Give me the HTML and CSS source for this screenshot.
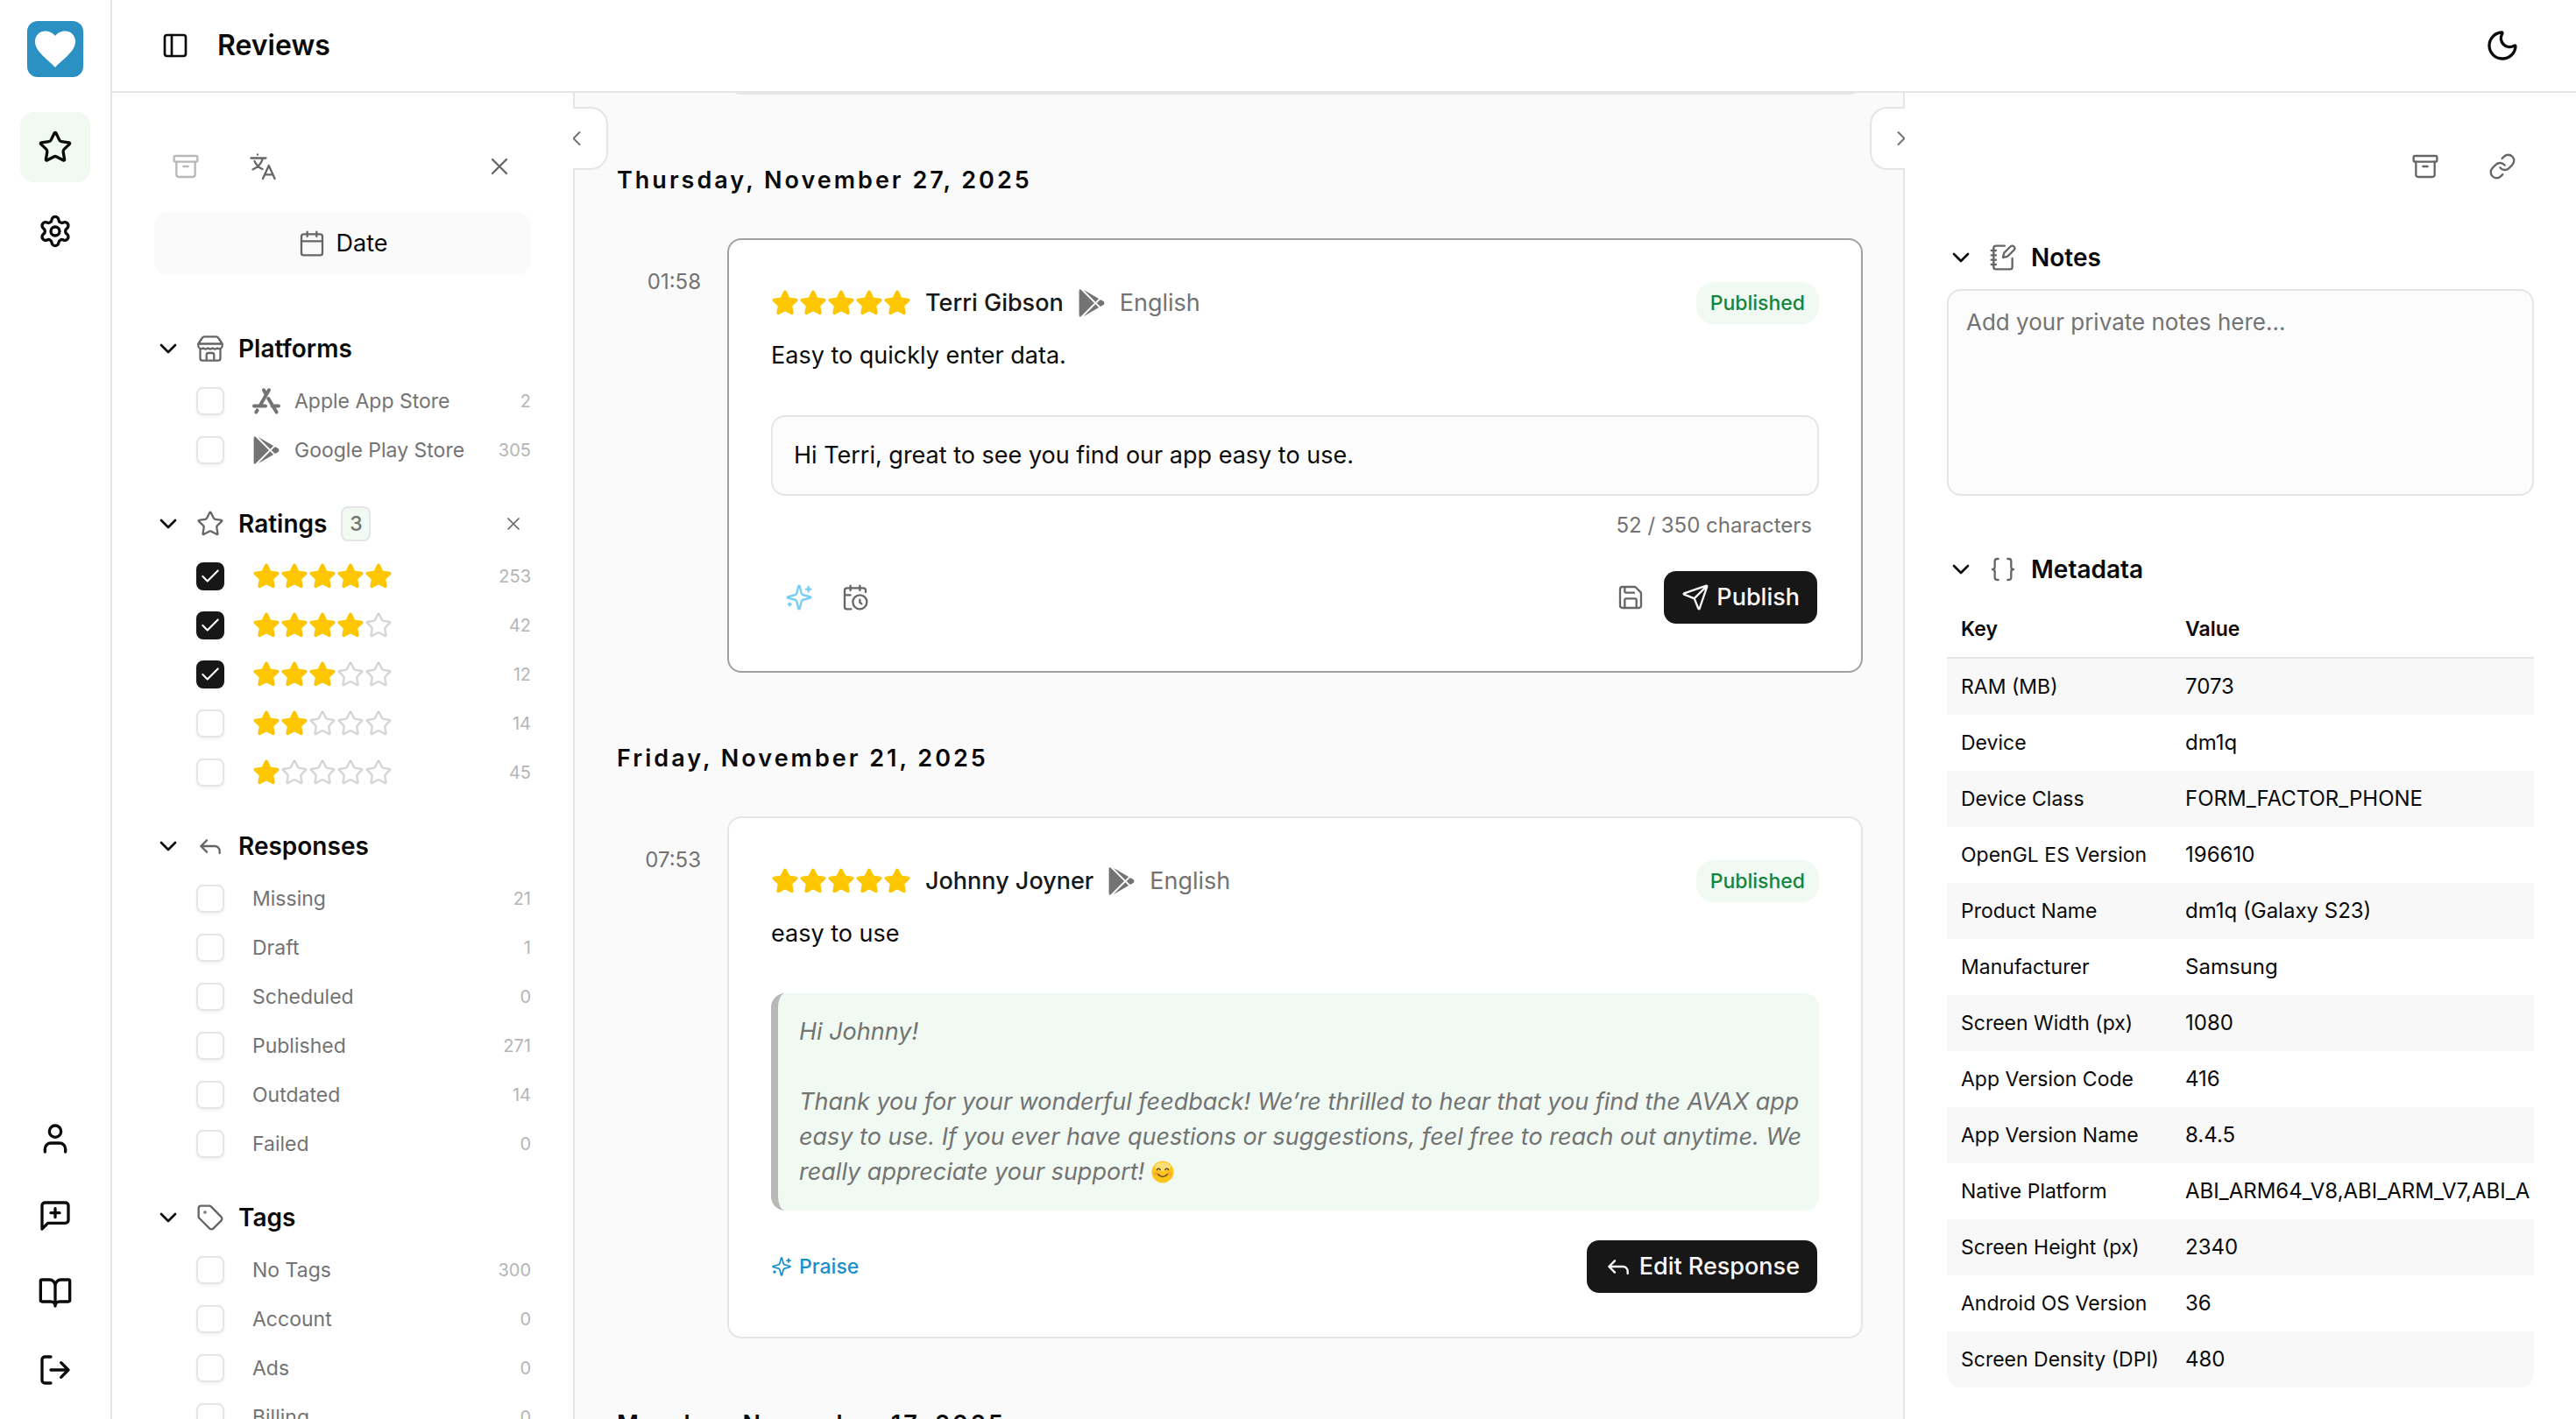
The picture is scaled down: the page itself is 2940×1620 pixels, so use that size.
FILE: index.html
```html
<!DOCTYPE html>
<html lang="en">
<head>
<meta charset="utf-8">
<meta name="viewport" content="width=device-width, initial-scale=1">
<title>Reviews</title>
<link rel="stylesheet" href="styles.css">
</head>
<body>
<svg class="sprite" aria-hidden="true">
  <symbol id="star" viewBox="0 0 24 24"><path d="M11.525 2.295a.53.53 0 0 1 .95 0l2.31 4.679a2.123 2.123 0 0 0 1.595 1.16l5.166.756a.53.53 0 0 1 .294.904l-3.736 3.638a2.123 2.123 0 0 0-.611 1.878l.882 5.14a.53.53 0 0 1-.771.56l-4.618-2.428a2.122 2.122 0 0 0-1.973 0L6.396 21.01a.53.53 0 0 1-.77-.56l.881-5.139a2.122 2.122 0 0 0-.611-1.879L2.16 9.795a.53.53 0 0 1 .294-.906l5.165-.755a2.122 2.122 0 0 0 1.597-1.16z"/></symbol>
  <symbol id="settings" viewBox="0 0 24 24"><path d="M9.671 4.136a2.34 2.34 0 0 1 4.659 0 2.34 2.34 0 0 0 3.319 1.915 2.34 2.34 0 0 1 2.33 4.033 2.34 2.34 0 0 0 0 3.831 2.34 2.34 0 0 1-2.33 4.033 2.34 2.34 0 0 0-3.319 1.915 2.34 2.34 0 0 1-4.659 0 2.34 2.34 0 0 0-3.32-1.915 2.34 2.34 0 0 1-2.33-4.033 2.34 2.34 0 0 0 0-3.831A2.34 2.34 0 0 1 6.35 6.051a2.34 2.34 0 0 0 3.319-1.915"/><circle cx="12" cy="12" r="3"/></symbol>
  <symbol id="user" viewBox="0 0 24 24"><path d="M19 21v-2a4 4 0 0 0-4-4H9a4 4 0 0 0-4 4v2"/><circle cx="12" cy="7" r="4"/></symbol>
  <symbol id="chat" viewBox="0 0 24 24"><path d="M21 15a2 2 0 0 1-2 2H7l-4 4V5a2 2 0 0 1 2-2h14a2 2 0 0 1 2 2zM12 7v6M9 10h6"/></symbol>
  <symbol id="book" viewBox="0 0 24 24"><path d="M12 7v14M3 18a1 1 0 0 1-1-1V4a1 1 0 0 1 1-1h5a4 4 0 0 1 4 4 4 4 0 0 1 4-4h5a1 1 0 0 1 1 1v13a1 1 0 0 1-1 1h-6a3 3 0 0 0-3 3 3 3 0 0 0-3-3z"/></symbol>
  <symbol id="logout" viewBox="0 0 24 24"><path d="M9 21H5a2 2 0 0 1-2-2V5a2 2 0 0 1 2-2h4M16 17l5-5-5-5M21 12H9"/></symbol>
  <symbol id="panel" viewBox="0 0 24 24"><rect x="3" y="3" width="18" height="18" rx="2"/><path d="M9 3v18"/></symbol>
  <symbol id="moon" viewBox="0 0 24 24"><path d="M20.985 12.486a9 9 0 1 1-9.473-9.472c.405-.022.617.46.402.803a6 6 0 0 0 8.268 8.268c.344-.215.825-.004.803.401"/></symbol>
  <symbol id="archive" viewBox="0 0 24 24"><rect x="2" y="3" width="20" height="5" rx="1"/><path d="M4 8v11a2 2 0 0 0 2 2h12a2 2 0 0 0 2-2V8M10 12h4"/></symbol>
  <symbol id="translate" viewBox="0 0 32 32"><path d="M2.5 6.500h17M10 2.500v.2M16 6.500C14.500 12 10.500 17 4.500 19.500M6.500 10c2 4 5 7.500 9 9M16 30l6.800-15 6.800 15M18.300 25.300h9"/></symbol>
  <symbol id="x" viewBox="0 0 24 24"><path d="M18 6 6 18M6 6l12 12"/></symbol>
  <symbol id="calendar" viewBox="0 0 24 24"><path d="M8 2v4M16 2v4M3 10h18"/><rect x="3" y="4" width="18" height="18" rx="2"/></symbol>
  <symbol id="down" viewBox="0 0 24 24"><path d="m6 9 6 6 6-6"/></symbol>
  <symbol id="left" viewBox="0 0 24 24"><path d="m15 18-6-6 6-6"/></symbol>
  <symbol id="right" viewBox="0 0 24 24"><path d="m9 18 6-6-6-6"/></symbol>
  <symbol id="store" viewBox="0 0 32 32"><path d="M2.300 10.500 7 3.500Q7.800 2.300 9.200 2.300h13.600q1.400 0 2.200 1.200l4.700 7zM2.300 10.500v2.500a3.400 3.400 0 0 0 5.500 2.400 4.300 4.300 0 0 0 5.500 0 4.300 4.300 0 0 0 5.400 0 4.300 4.300 0 0 0 5.500 0 3.400 3.400 0 0 0 5.500-2.400v-2.500M4.500 16.200V27q0 2.700 2.700 2.700h17.600q2.700 0 2.700-2.700V16.200M11.700 29.700v-6.500q0-2.200 2.200-2.200h4.200q2.200 0 2.200 2.200v6.500"/></symbol>
  <symbol id="appstore" viewBox="0 0 32 32"><path d="M19 3.300 9.300 20M5.600 26.400l-1.300 2.200M13 3.300l2.600 4.600M18.300 13l9.300 15.600M2 21.600h13M22.500 21.600H30"/></symbol>
  <symbol id="play" viewBox="0 0 512 512"><path d="M325.3 234.300L104.600 13l280.800 161.200-60.100 60.100zM47 0C34 6.800 25.300 19.200 25.300 35.300v441.300c0 16.100 8.700 28.500 21.700 35.300l256.600-256L47 0zm425.200 225.600l-58.900-34.100-65.700 64.500 65.700 64.500 60.100-34.100c18-14.300 18-46.500-1.200-60.800zM104.600 499l280.800-161.200-60.100-60.100L104.600 499z"/></symbol>
  <symbol id="reply" viewBox="0 0 24 24"><path d="M20 18v-2a4 4 0 0 0-4-4H4M9 17l-5-5 5-5"/></symbol>
  <symbol id="tag" viewBox="0 0 24 24"><path d="M12.586 2.586A2 2 0 0 0 11.172 2H4a2 2 0 0 0-2 2v7.172a2 2 0 0 0 .586 1.414l8.704 8.704a2.426 2.426 0 0 0 3.420 0l6.580-6.580a2.426 2.426 0 0 0 0-3.420z"/><circle cx="7.500" cy="7.500" r=".5"/></symbol>
  <symbol id="sparkles" viewBox="0 0 24 24"><path d="M9.937 15.500A2 2 0 0 0 8.500 14.063l-6.135-1.582a.5.5 0 0 1 0-.962L8.500 9.936A2 2 0 0 0 9.937 8.500l1.582-6.135a.5.5 0 0 1 .963 0L14.063 8.500A2 2 0 0 0 15.500 9.937l6.135 1.581a.5.5 0 0 1 0 .964L15.500 14.063a2 2 0 0 0-1.437 1.437l-1.582 6.135a.5.5 0 0 1-.963 0zM20 3v4M22 5h-4M4 17v2M5 18H3"/></symbol>
  <symbol id="schedule" viewBox="0 0 24 24"><path d="M21 7.500V6a2 2 0 0 0-2-2H5a2 2 0 0 0-2 2v14a2 2 0 0 0 2 2h3.500M16 2v4M8 2v4M3 10h5M17.500 17.500 16 16.300V14"/><circle cx="16" cy="16" r="6"/></symbol>
  <symbol id="save" viewBox="0 0 24 24"><path d="M15.200 3a2 2 0 0 1 1.400.6l3.800 3.800a2 2 0 0 1 .6 1.400V19a2 2 0 0 1-2 2H5a2 2 0 0 1-2-2V5a2 2 0 0 1 2-2zM17 21v-7a1 1 0 0 0-1-1H8a1 1 0 0 0-1 1v7M7 3v4a1 1 0 0 0 1 1h7"/></symbol>
  <symbol id="send" viewBox="0 0 24 24"><path d="M14.536 21.686a.5.5 0 0 0 .937-.024l6.500-19a.496.496 0 0 0-.635-.635l-19 6.500a.5.5 0 0 0-.024.937l7.930 3.180a2 2 0 0 1 1.112 1.110zM21.854 2.147l-10.940 10.939"/></symbol>
  <symbol id="link" viewBox="0 0 24 24"><path d="M10 13a5 5 0 0 0 7.540.540l3-3a5 5 0 0 0-7.070-7.070l-1.720 1.710M14 11a5 5 0 0 0-7.540-.540l-3 3a5 5 0 0 0 7.070 7.070l1.710-1.710"/></symbol>
  <symbol id="notebook" viewBox="0 0 24 24"><path d="M13.400 2H6a2 2 0 0 0-2 2v16a2 2 0 0 0 2 2h12a2 2 0 0 0 2-2v-7.400M2 6h4M2 10h4M2 14h4M2 18h4M21.378 5.626a1 1 0 1 0-3.004-3.004l-5.010 5.012a2 2 0 0 0-.506.854l-.837 2.870a.5.5 0 0 0 .620.620l2.870-.837a2 2 0 0 0 .854-.506z"/></symbol>
  <symbol id="braces" viewBox="0 0 24 24"><path d="M8 3H7a2 2 0 0 0-2 2v5a2 2 0 0 1-2 2 2 2 0 0 1 2 2v5c0 1.100.900 2 2 2h1M16 21h1a2 2 0 0 0 2-2v-5c0-1.100.900-2 2-2a2 2 0 0 1-2-2V5a2 2 0 0 0-2-2h-1"/></symbol>
  <symbol id="smile" viewBox="0 0 26 26"><circle cx="13" cy="13" r="12.500" fill="#fdc41c"/><ellipse cx="13" cy="7" rx="9" ry="5" fill="#fee07a"/><path d="M6.500 10.500q1.800-3 3.600 0M15.900 10.500q1.800-3 3.600 0M7.500 15.500q5.500 6 11 0" fill="none" stroke="#6b4a12" stroke-width="1.600" stroke-linecap="round"/><circle cx="5" cy="15" r="2.200" fill="#f79a3a" opacity=".6"/><circle cx="21" cy="15" r="2.200" fill="#f79a3a" opacity=".6"/></symbol>
  <symbol id="fivestars" viewBox="0 0 120 24"><use href="#star" width="24" height="24"/><use href="#star" x="24" width="24" height="24"/><use href="#star" x="48" width="24" height="24"/><use href="#star" x="72" width="24" height="24"/><use href="#star" x="96" width="24" height="24"/></symbol>
</svg>

<div class="app">
  <nav class="rail" aria-label="Main">
    <a class="logo" href="#" aria-label="Home"><svg viewBox="0 0 64 64"><path d="M32 53C24 44 9 35 9 23.500 9 16 14.500 11.500 20.500 11.500 26 11.500 30 14 32 17c2-3 6-5.500 11.500-5.500C49.500 11.500 55 16 55 23.500 55 35 40 44 32 53z" fill="#fff"/></svg></a>
    <div class="rail-main">
      <a class="rail-link active" href="#" aria-label="Reviews"><svg class="icon lg"><use href="#star"/></svg></a>
      <a class="rail-link" href="#" aria-label="Settings"><svg class="icon lg"><use href="#settings"/></svg></a>
    </div>
    <div class="rail-foot">
      <a class="rail-link" href="#" aria-label="Account"><svg class="icon lg"><use href="#user"/></svg></a>
      <a class="rail-link" href="#" aria-label="Feedback"><svg class="icon lg"><use href="#chat"/></svg></a>
      <a class="rail-link" href="#" aria-label="Docs"><svg class="icon lg"><use href="#book"/></svg></a>
      <a class="rail-link" href="#" aria-label="Log out"><svg class="icon lg"><use href="#logout"/></svg></a>
    </div>
  </nav>

  <div class="page">
    <header class="topbar">
      <button class="plain" aria-label="Toggle sidebar"><svg class="icon bold"><use href="#panel"/></svg></button>
      <h1>Reviews</h1>
      <button class="tool theme" aria-label="Dark mode"><svg class="icon lg"><use href="#moon"/></svg></button>
    </header>

    <div class="columns">
      <aside class="filters" aria-label="Filters">
        <div class="toolbar">
          <button class="tool" aria-label="Archived" disabled><svg class="icon"><use href="#archive"/></svg></button>
          <button class="tool" aria-label="Translate"><svg class="icon glyph32"><use href="#translate"/></svg></button>
          <button class="tool end" aria-label="Clear filters"><svg class="icon"><use href="#x"/></svg></button>
        </div>
        <button class="date"><svg class="icon"><use href="#calendar"/></svg>Date</button>

        <section class="group">
          <h2><button class="fold"><svg class="icon chev"><use href="#down"/></svg><svg class="icon glyph32"><use href="#store"/></svg>Platforms</button></h2>
          <label class="opt"><input type="checkbox"><span class="name"><svg class="icon brand"><use href="#appstore"/></svg>Apple App Store</span><span class="count">2</span></label>
          <label class="opt"><input type="checkbox"><span class="name"><svg class="icon solid"><use href="#play"/></svg>Google Play Store</span><span class="count">305</span></label>
        </section>

        <section class="group">
          <h2><button class="fold"><svg class="icon chev"><use href="#down"/></svg><svg class="icon"><use href="#star"/></svg>Ratings<span class="badge">3</span></button><button class="clear" aria-label="Clear ratings"><svg class="icon sm"><use href="#x"/></svg></button></h2>
          <label class="opt"><input type="checkbox" checked aria-label="5 stars"><span class="stars"><svg class="on"><use href="#star"/></svg><svg class="on"><use href="#star"/></svg><svg class="on"><use href="#star"/></svg><svg class="on"><use href="#star"/></svg><svg class="on"><use href="#star"/></svg></span><span class="count">253</span></label>
          <label class="opt"><input type="checkbox" checked aria-label="4 stars"><span class="stars"><svg class="on"><use href="#star"/></svg><svg class="on"><use href="#star"/></svg><svg class="on"><use href="#star"/></svg><svg class="on"><use href="#star"/></svg><svg><use href="#star"/></svg></span><span class="count">42</span></label>
          <label class="opt"><input type="checkbox" checked aria-label="3 stars"><span class="stars"><svg class="on"><use href="#star"/></svg><svg class="on"><use href="#star"/></svg><svg class="on"><use href="#star"/></svg><svg><use href="#star"/></svg><svg><use href="#star"/></svg></span><span class="count">12</span></label>
          <label class="opt"><input type="checkbox" aria-label="2 stars"><span class="stars"><svg class="on"><use href="#star"/></svg><svg class="on"><use href="#star"/></svg><svg><use href="#star"/></svg><svg><use href="#star"/></svg><svg><use href="#star"/></svg></span><span class="count">14</span></label>
          <label class="opt"><input type="checkbox" aria-label="1 star"><span class="stars"><svg class="on"><use href="#star"/></svg><svg><use href="#star"/></svg><svg><use href="#star"/></svg><svg><use href="#star"/></svg><svg><use href="#star"/></svg></span><span class="count">45</span></label>
        </section>

        <section class="group">
          <h2><button class="fold"><svg class="icon chev"><use href="#down"/></svg><svg class="icon"><use href="#reply"/></svg>Responses</button></h2>
          <label class="opt"><input type="checkbox"><span class="name">Missing</span><span class="count">21</span></label>
          <label class="opt"><input type="checkbox"><span class="name">Draft</span><span class="count">1</span></label>
          <label class="opt"><input type="checkbox"><span class="name">Scheduled</span><span class="count">0</span></label>
          <label class="opt"><input type="checkbox"><span class="name">Published</span><span class="count">271</span></label>
          <label class="opt"><input type="checkbox"><span class="name">Outdated</span><span class="count">14</span></label>
          <label class="opt"><input type="checkbox"><span class="name">Failed</span><span class="count">0</span></label>
        </section>

        <section class="group">
          <h2><button class="fold"><svg class="icon chev"><use href="#down"/></svg><svg class="icon"><use href="#tag"/></svg>Tags</button></h2>
          <label class="opt"><input type="checkbox"><span class="name">No Tags</span><span class="count">300</span></label>
          <label class="opt"><input type="checkbox"><span class="name">Account</span><span class="count">0</span></label>
          <label class="opt"><input type="checkbox"><span class="name">Ads</span><span class="count">0</span></label>
          <label class="opt"><input type="checkbox"><span class="name">Billing</span><span class="count">0</span></label>
        </section>
      </aside>

      <main class="feed">
        <button class="tab tab-left" aria-label="Collapse filters"><svg class="icon md"><use href="#left"/></svg></button>
        <button class="tab tab-right" aria-label="Collapse details"><svg class="icon md"><use href="#right"/></svg></button>

        <div class="list">
          <div class="entry scrolled"><span></span><article class="card"></article></div>

          <h2 class="day">Thursday, November 27, 2025</h2>
          <div class="entry">
            <time>01:58</time>
            <article class="card selected">
              <div class="meta">
                <svg class="five"><use href="#fivestars"/></svg>
                <strong>Terri Gibson</strong>
                <svg class="icon solid"><use href="#play"/></svg>
                <span class="lang">English</span>
                <span class="status">Published</span>
              </div>
              <p class="text">Easy to quickly enter data.</p>
              <textarea class="reply" aria-label="Response" rows="1">Hi Terri, great to see you find our app easy to use.</textarea>
              <p class="chars">52 / 350 characters</p>
              <div class="actions editor">
                <button class="act ai" aria-label="Suggest"><svg class="icon"><use href="#sparkles"/></svg></button>
                <button class="act" aria-label="Schedule"><svg class="icon"><use href="#schedule"/></svg></button>
                <button class="act end" aria-label="Save draft"><svg class="icon"><use href="#save"/></svg></button>
                <button class="primary"><svg class="icon"><use href="#send"/></svg>Publish</button>
              </div>
            </article>
          </div>

          <h2 class="day">Friday, November 21, 2025</h2>
          <div class="entry">
            <time>07:53</time>
            <article class="card">
              <div class="meta">
                <svg class="five"><use href="#fivestars"/></svg>
                <strong>Johnny Joyner</strong>
                <svg class="icon solid"><use href="#play"/></svg>
                <span class="lang">English</span>
                <span class="status">Published</span>
              </div>
              <p class="text">easy to use</p>
              <blockquote>Hi Johnny!<br><br>Thank you for your wonderful feedback! We’re thrilled to hear that you find the AVAX app easy to use. If you ever have questions or suggestions, feel free to reach out anytime. We really appreciate your support! <svg class="emoji" role="img" aria-label="smile"><use href="#smile"/></svg></blockquote>
              <div class="actions">
                <a class="label" href="#"><svg class="icon sm"><use href="#sparkles"/></svg>Praise</a>
                <button class="primary end"><svg class="icon"><use href="#reply"/></svg>Edit Response</button>
              </div>
            </article>
          </div>

          <h2 class="day">Monday, November 17, 2025</h2>
        </div>
      </main>

      <aside class="details" aria-label="Details">
        <div class="toolbar">
          <button class="tool end" aria-label="Archive"><svg class="icon"><use href="#archive"/></svg></button>
          <button class="tool" aria-label="Copy link"><svg class="icon"><use href="#link"/></svg></button>
        </div>

        <section class="notes">
          <h2><button class="fold"><svg class="icon chev"><use href="#down"/></svg><svg class="icon"><use href="#notebook"/></svg>Notes</button></h2>
          <textarea class="note" aria-label="Notes" placeholder="Add your private notes here..."></textarea>
        </section>

        <section class="metadata">
          <h2><button class="fold"><svg class="icon chev"><use href="#down"/></svg><svg class="icon"><use href="#braces"/></svg>Metadata</button></h2>
          <table>
            <thead><tr><th scope="col">Key</th><th scope="col">Value</th></tr></thead>
            <tbody>
              <tr><td>RAM (MB)</td><td>7073</td></tr>
              <tr><td>Device</td><td>dm1q</td></tr>
              <tr><td>Device Class</td><td>FORM_FACTOR_PHONE</td></tr>
              <tr><td>OpenGL ES Version</td><td>196610</td></tr>
              <tr><td>Product Name</td><td>dm1q (Galaxy S23)</td></tr>
              <tr><td>Manufacturer</td><td>Samsung</td></tr>
              <tr><td>Screen Width (px)</td><td>1080</td></tr>
              <tr><td>App Version Code</td><td>416</td></tr>
              <tr><td>App Version Name</td><td>8.4.5</td></tr>
              <tr><td>Native Platform</td><td>ABI_ARM64_V8,ABI_ARM_V7,ABI_A</td></tr>
              <tr><td>Screen Height (px)</td><td>2340</td></tr>
              <tr><td>Android OS Version</td><td>36</td></tr>
              <tr><td>Screen Density (DPI)</td><td>480</td></tr>
            </tbody>
          </table>
        </section>
      </aside>
    </div>
  </div>
</div>
</body>
</html>
```
FILE: styles.css
```css
:root {
  --ink: #0a0a0a;
  --muted: #737373;
  --faint: #b5b5b5;
  --line: #e5e5e5;
  --surface: #fafafa;
  --mint: #f0f9f2;
  --dark: #171717;
  --blue: #2a91c2;
}

* { box-sizing: border-box; }

body {
  margin: 0;
  font-family: Inter, "Liberation Sans", sans-serif;
  font-size: 27px;
  line-height: 40px;
  color: var(--ink);
  background: #fff;
}

h1, h2, p, blockquote { margin: 0; }

button {
  font: inherit;
  color: inherit;
  background: none;
  border: 0;
  padding: 0;
  display: flex;
  align-items: center;
  justify-content: center;
}

a { color: inherit; text-decoration: none; }

.sprite { display: none; }

.icon {
  width: 32px;
  height: 32px;
  flex: none;
  fill: none;
  stroke: currentColor;
  stroke-width: 1.75;
  stroke-linecap: round;
  stroke-linejoin: round;
}
.icon.lg { width: 40px; height: 40px; stroke-width: 2; }
.icon.md { width: 28px; height: 28px; }
.icon.sm { width: 24px; height: 24px; }
.icon.bold { stroke-width: 2; }
.icon.glyph32 { stroke-width: 2.3; }
.icon.brand { stroke-width: 4; }
.icon.solid { fill: var(--muted); stroke: none; }

.app { display: flex; height: 100vh; overflow: hidden; }

/* Icon rail */
.rail {
  flex: none;
  width: 128px;
  display: flex;
  flex-direction: column;
  align-items: center;
  padding: 24px 0 16px;
  border-right: 2px solid var(--line);
}
.logo { width: 64px; height: 64px; border-radius: 12px; background: var(--blue); }
.logo svg { display: block; }
.rail-main { display: grid; gap: 16px; margin-top: 40px; }
.rail-foot { display: grid; gap: 8px; margin-top: auto; }
.rail-link {
  width: 80px;
  height: 80px;
  display: grid;
  place-items: center;
  border-radius: 16px;
}
.rail-link.active { background: var(--mint); }

/* Page frame */
.page { flex: 1; min-width: 0; display: flex; flex-direction: column; }
.topbar {
  flex: none;
  display: flex;
  align-items: center;
  height: 106px;
  padding: 0 48px 0 56px;
  border-bottom: 2px solid var(--line);
}
.topbar h1 { margin-left: 32px; font-size: 32px; font-weight: 600; }
.theme { margin-left: auto; }
.columns { flex: 1; min-height: 0; display: flex; }

.toolbar { display: flex; gap: 16px; color: #666; }
.tool { width: 72px; height: 72px; }
.tool:disabled { color: #b8b8b8; }
.end { margin-left: auto; }

.filters h2, .details h2 { display: flex; align-items: center; height: 40px; }
.fold { gap: 16px; font-size: 28px; font-weight: 600; }
.fold .icon { color: #666; }
.fold .icon.chev { color: var(--ink); stroke-width: 2; }

/* Filters */
.filters {
  flex: none;
  width: 528px;
  overflow: hidden;
  padding: 48px 48px 0;
  border-right: 2px solid var(--line);
}
.date {
  width: 100%;
  height: 72px;
  gap: 12px;
  margin: 16px 0 64px;
  border-radius: 16px;
  background: var(--surface);
}
.date .icon { color: #666; }
.group { margin-bottom: 36px; }
.group h2 { margin-bottom: 12px; justify-content: space-between; }
.badge {
  width: 34px;
  height: 40px;
  line-height: 36px;
  border: 2px solid var(--line);
  border-radius: 8px;
  background: var(--mint);
  color: var(--muted);
  font-size: 23px;
  font-weight: 500;
}
.clear { width: 40px; height: 40px; color: #666; }
.opt {
  display: flex;
  align-items: center;
  height: 56px;
  padding-left: 48px;
  font-size: 23px;
  color: var(--muted);
}
.opt input {
  appearance: none;
  flex: none;
  width: 32px;
  height: 32px;
  margin: 0 32px 0 0;
  border: 2px solid var(--line);
  border-radius: 8px;
  background: #fff center / 26px no-repeat;
  box-shadow: 0 2px 4px rgb(0 0 0 / 5%);
}
.opt input:checked {
  border-color: var(--dark);
  background-color: var(--dark);
  background-image: url("data:image/svg+xml,%3Csvg xmlns='http://www.w3.org/2000/svg' viewBox='0 0 24 24' fill='none' stroke='white' stroke-width='2' stroke-linecap='round' stroke-linejoin='round'%3E%3Cpath d='M20 6 9 17l-5-5'/%3E%3C/svg%3E");
}
.name { display: flex; align-items: center; gap: 16px; }
.count { margin-left: auto; font-size: 20px; color: var(--faint); }
.stars { display: flex; }
.stars svg {
  width: 32px;
  height: 32px;
  fill: none;
  stroke: #d4d4d4;
  stroke-width: 1.75;
}
.stars .on { fill: #fdc700; stroke: #fdc700; }

/* Review feed */
.feed {
  position: relative;
  flex: 1;
  min-width: 0;
  overflow: clip;
  overflow-clip-margin: 2px;
  background: var(--surface);
}
.tab {
  position: absolute;
  top: 16px;
  z-index: 1;
  width: 40px;
  height: 72px;
  border: 2px solid var(--line);
  background: #fff;
  color: var(--muted);
}
.tab-left {
  left: -2px;
  justify-content: flex-start;
  border-left: 0;
  border-radius: 0 20px 20px 0;
}
.tab-right {
  right: -2px;
  justify-content: flex-end;
  border-right: 0;
  border-radius: 20px 0 0 20px;
}
.tab .icon { margin: 0 -10px; }
.list { height: 100%; overflow: hidden; padding: 0 46px 0 48px; }
.entry { display: grid; grid-template-columns: 96px minmax(0, 1fr); gap: 30px; }
.entry.scrolled { margin-top: -98px; }
.day {
  padding: 80px 0 48px;
  line-height: 36px;
  font-size: 27px;
  font-weight: 600;
  letter-spacing: 3px;
}
time {
  padding-top: 34px;
  line-height: 32px;
  font-size: 24px;
  text-align: right;
  color: var(--muted);
}
.card {
  padding: 48px;
  border: 2px solid var(--line);
  border-radius: 16px;
  background: #fff;
}
.card.selected { border-color: #a1a1a1; }
.meta { display: flex; align-items: center; gap: 16px; height: 48px; }
.five {
  width: 160px;
  height: 32px;
  fill: #fdc700;
  stroke: #fdc700;
  stroke-width: 1.75;
}
.meta strong { font-weight: 500; color: var(--dark); }
.lang { color: var(--muted); }
.status {
  margin-left: auto;
  padding: 0 16px;
  line-height: 48px;
  border-radius: 20px;
  background: var(--mint);
  color: #15853b;
  font-size: 23px;
  font-weight: 500;
}
.text { margin: 16px 0 48px; }
textarea {
  display: block;
  width: 100%;
  font: inherit;
  color: inherit;
  border: 2px solid var(--line);
  border-radius: 16px;
  background: #fcfcfc;
  resize: none;
  overflow: hidden;
}
textarea::placeholder { color: var(--muted); opacity: 1; }
.reply { height: 92px; padding: 24px; }
.chars {
  margin: 16px 0 32px;
  padding-right: 8px;
  line-height: 36px;
  font-size: 24px;
  text-align: right;
  color: var(--muted);
}
.actions { display: flex; align-items: center; padding: 2px 2px 2px 0; }
.actions.editor { padding-bottom: 6px; }
.act { width: 64px; height: 60px; color: #666; }
.act.ai { color: #78cdf5; }
.act.end { margin-right: 6px; }
.primary {
  height: 60px;
  gap: 8px;
  padding: 0 20px;
  border-radius: 14px;
  background: var(--dark);
  color: #fafafa;
  font-weight: 500;
}
blockquote {
  margin-bottom: 32px;
  padding: 24px 12px 24px 24px;
  border-left: 8px solid #b8b8b8;
  border-radius: 16px;
  background: var(--mint);
  color: var(--muted);
  font-style: italic;
}
.emoji { width: 26px; height: 26px; vertical-align: -4px; }
.label { display: flex; align-items: center; gap: 8px; font-size: 23px; font-weight: 500; color: #1890cc; }

/* Details */
.details {
  flex: none;
  width: 768px;
  overflow: hidden;
  padding: 48px 48px 0;
  border-left: 2px solid var(--line);
}
.notes { margin: 48px 0 64px; }
.note { height: 236px; margin-top: 16px; padding: 16px 20px; font-size: 26px; }
table {
  width: 100%;
  margin-top: 16px;
  table-layout: fixed;
  border-collapse: separate;
  border-spacing: 0;
  font-size: 24px;
}
th, td { height: 64px; padding: 0 16px; text-align: left; }
th { height: 66px; border-bottom: 2px solid var(--line); font-size: 23px; font-weight: 600; }
th:first-child { width: 256px; }
td { white-space: nowrap; }
td:first-child { font-size: 23px; }
td:last-child { padding-right: 0; }
tbody tr:nth-child(odd) td { background: #f8f8f8; }
tbody tr:last-child td:first-child { border-bottom-left-radius: 16px; }
tbody tr:last-child td:last-child { border-bottom-right-radius: 16px; }
```
